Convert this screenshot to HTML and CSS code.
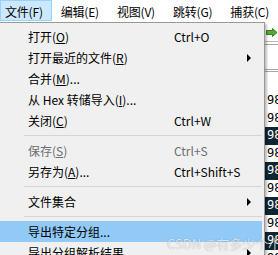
FILE: index.html
```html
<!DOCTYPE html>
<html>
<head>
	<title>文件菜单</title>
	<link rel="stylesheet" href="styles.css">
</head>
<body>
	<nav class="menubar">
		<span class="top-item active">文件(F)</span>
		<span class="top-item">编辑(E)</span>
		<span class="top-item">视图(V)</span>
		<span class="top-item">跳转(G)</span>
		<span class="top-item">捕获(C)</span>
		<span class="top-item">分析(A)</span>
	</nav>

	<div class="workspace">
		<div class="toolbar">
			<svg class="tool-icon" width="12" height="9" viewBox="0 0 12 9">
				<path d="M0.5 2.5 H6.5 V0.5 L11 4.5 L6.5 8.5 V6.5 H0.5 Z" fill="#4caf2a" stroke="#3d7a25" stroke-width="1"/>
			</svg>
		</div>
		<div class="filterbar"></div>
		<div class="list-header"></div>
		<div class="packet-list">
			<div class="row"><span>1</span><span>98.112345</span></div>
			<div class="row"><span>2</span><span>98.113020</span></div>
			<div class="row dark"><span>3</span><span>98.113874</span></div>
			<div class="row"><span>4</span><span>98.114501</span></div>
			<div class="row dark"><span>5</span><span>98.115233</span></div>
			<div class="row"><span>6</span><span>98.116012</span></div>
			<div class="row dark"><span>7</span><span>98.116790</span></div>
			<div class="row"><span>8</span><span>98.117455</span></div>
			<div class="row dark"><span>9</span><span>98.118103</span></div>
			<div class="row"><span>10</span><span>98.118866</span></div>
		</div>
	</div>

	<div class="popup">
		<div class="item"><span>打开(<u>O</u>)</span><span>Ctrl+O</span><span></span></div>
		<div class="item"><span>打开最近的文件(<u>R</u>)</span><span></span><span class="arrow"></span></div>
		<div class="item"><span>合并(<u>M</u>)...</span><span></span><span></span></div>
		<div class="item"><span>从 Hex 转储导入(<u>I</u>)...</span><span></span><span></span></div>
		<div class="item"><span>关闭(<u>C</u>)</span><span>Ctrl+W</span><span></span></div>
		<div class="sep"></div>
		<div class="item disabled"><span>保存(<u>S</u>)</span><span>Ctrl+S</span><span></span></div>
		<div class="item"><span>另存为(<u>A</u>)...</span><span>Ctrl+Shift+S</span><span></span></div>
		<div class="sep"></div>
		<div class="item"><span>文件集合</span><span></span><span class="arrow"></span></div>
		<div class="sep"></div>
		<div class="item hover"><span>导出特定分组...</span><span></span><span></span></div>
		<div class="item"><span>导出分组解析结果</span><span></span><span class="arrow"></span></div>
		<div class="item"><span>导出分组字节流(<u>B</u>)...</span><span>Ctrl+Shift+X</span><span></span></div>
	</div>

	<div class="watermark">CSDN @有多少个小土豆</div>
</body>
</html>
```

FILE: styles.css
```css
html, body {
	margin: 0;
	padding: 0;
	width: 278px;
	height: 255px;
	overflow: hidden;
	background-color: #ffffff;
	font-family: "Noto Sans CJK SC", "Noto Sans", sans-serif;
	font-size: 12px;
	color: #000000;
}

body {
	position: relative;
}

/* top menu bar */
.menubar {
	display: flex;
	height: 22px;
	background-color: #ffffff;
	white-space: nowrap;
	letter-spacing: -0.2px;
}

.top-item {
	box-sizing: border-box;
	height: 21px;
	padding: 2px 8px 0 8px;
	line-height: 17px;
	border: 1px solid transparent;
}

.top-item:first-child {
	padding-left: 4px;
}

.top-item.active {
	background-color: #cce8ff;
	border-color: #99d1ff;
}

/* window content behind the menu */
.workspace {
	background-color: #ffffff;
}

.toolbar {
	height: 19px;
	border-bottom: 1px solid #b9b9b9;
	display: flex;
	align-items: center;
	padding-left: 266px;
}

.tool-icon {
	margin-top: 2px;
}

.filterbar {
	margin-top: 2px;
	height: 24px;
	border-top: 1px solid #a8a8a8;
	border-bottom: 1px solid #a8a8a8;
}

.list-header {
	margin-top: 1px;
	height: 20px;
	border-top: 1px solid #a8a8a8;
}

.packet-list {
	font-family: "DejaVu Sans Mono", monospace;
	font-size: 12px;
}

.row {
	display: grid;
	grid-template-columns: 267px 1fr;
	height: 17.5px;
	line-height: 17.5px;
	white-space: nowrap;
	background-color: #ffffff;
	color: #000000;
}

.row.dark {
	background-color: #0f2630;
	color: #ffffff;
}

/* drop-down menu */
.popup {
	position: absolute;
	top: 22px;
	left: -1px;
	width: 266px;
	height: 260px;
	box-sizing: border-box;
	padding-top: 3px;
	background-color: #f0f0f0;
	border: 1px solid #999999;
	box-shadow: 2px 2px 2px rgba(0, 0, 0, 0.25);
}

.item {
	display: grid;
	grid-template-columns: 146px 73px 1fr;
	align-items: center;
	height: 21px;
	padding-left: 28px;
	margin-right: 2px;
	white-space: nowrap;
}

.item.disabled {
	color: #6d6d6d;
}

.item.hover {
	background-color: #91c9f7;
}

.item u {
	text-decoration: underline;
	text-underline-offset: 1px;
}

.arrow {
	width: 0;
	height: 0;
	border-left: 4px solid #000000;
	border-top: 4px solid transparent;
	border-bottom: 4px solid transparent;
}

.sep {
	height: 1px;
	margin: 4px 2px 4px 24px;
	background-color: #d5d5d5;
}

.watermark {
	position: absolute;
	left: 167px;
	top: 234px;
	font-size: 13px;
	white-space: nowrap;
	color: rgba(255, 255, 255, 0.75);
	text-shadow: 0 0 1px rgba(0, 0, 0, 0.35);
}
```
